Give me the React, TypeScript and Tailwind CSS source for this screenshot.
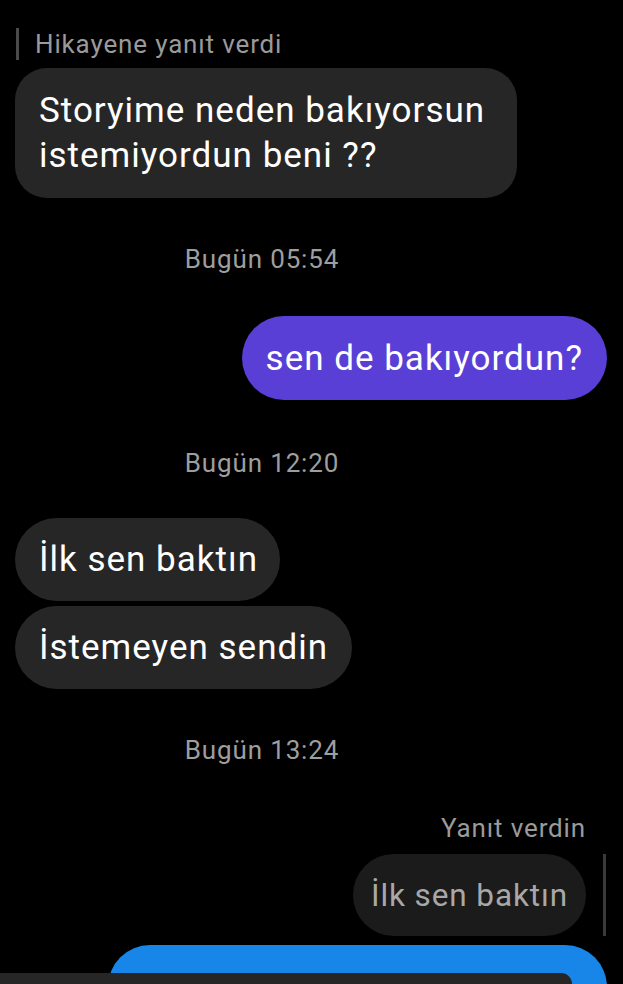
import React from "react";

export default function App() {
  const ts =
    "w-[524px] text-center text-[26px] leading-[30px] tracking-[0.85px] text-[#9e9e9e]";
  const bubbleText = "text-[35px] leading-[45px] tracking-[1px]";
  return (
    <div className="relative w-[623px] h-[984px] overflow-hidden bg-black font-['Roboto',sans-serif]">
      <div className="flex flex-col">
        <div className="ml-[16px] mt-[28px] flex h-[32px] items-stretch">
          <div className="w-[3px] bg-[#4a4a4a]" />
          <span className="ml-[16px] text-[26px] leading-[32px] tracking-[0.85px] text-[#9a9a9a]">
            Hikayene yanıt verdi
          </span>
        </div>
        <div
          className={`ml-[15px] mt-[8px] w-fit rounded-[32px] bg-[#262626] pl-6 pr-8 py-[20px] text-white ${bubbleText}`}
        >
          Storyime neden bakıyorsun
          <br />
          istemiyordun beni ??
        </div>

        <div className={`mt-[46px] ${ts}`}>Bugün 05:54</div>

        <div
          className={`ml-auto mr-[16px] mt-[42px] w-fit rounded-[42px] bg-[#5a3fd6] px-6 py-[19.5px] text-white ${bubbleText}`}
        >
          sen de bakıyordun?
        </div>

        <div className={`mt-[48px] ${ts}`}>Bugün 12:20</div>

        <div
          className={`ml-[15px] mt-[40px] w-fit rounded-[42px] bg-[#262626] pl-6 pr-[22px] py-[19px] text-white ${bubbleText}`}
        >
          İlk sen baktın
        </div>
        <div
          className={`ml-[15px] mt-[5px] w-fit rounded-[42px] bg-[#262626] px-6 py-[19px] text-white ${bubbleText}`}
        >
          İstemeyen sendin
        </div>

        <div className={`mt-[46px] ${ts}`}>Bugün 13:24</div>

        <div className="mr-[37px] mt-[48px] self-end text-[26px] leading-[30px] tracking-[0.85px] text-[#9a9a9a]">
          Yanıt verdin
        </div>
        <div className="mt-[11px] flex justify-end">
          <div className="w-fit rounded-[42px] bg-[#1b1b1b] px-[18px] py-[18.5px] text-[31.5px] leading-[45px] tracking-[0.9px] text-[#a8a8a8]">
            İlk sen baktın
          </div>
          <div className="ml-[17px] mr-[17px] w-[3px] self-stretch bg-[#3a3a3a]" />
        </div>

        <div
          className={`ml-auto mr-[16px] mt-[9px] w-[499px] rounded-[42px] bg-[#1786e8] px-6 pt-[27px] pb-[20px] text-white ${bubbleText}`}
        >
          ama ilk sen bakmıştın ben de baktım
        </div>
      </div>
      <div className="absolute bottom-0 left-0 h-[11px] w-[572px] rounded-tr-[20px] bg-[#262626]" />
    </div>
  );
}
